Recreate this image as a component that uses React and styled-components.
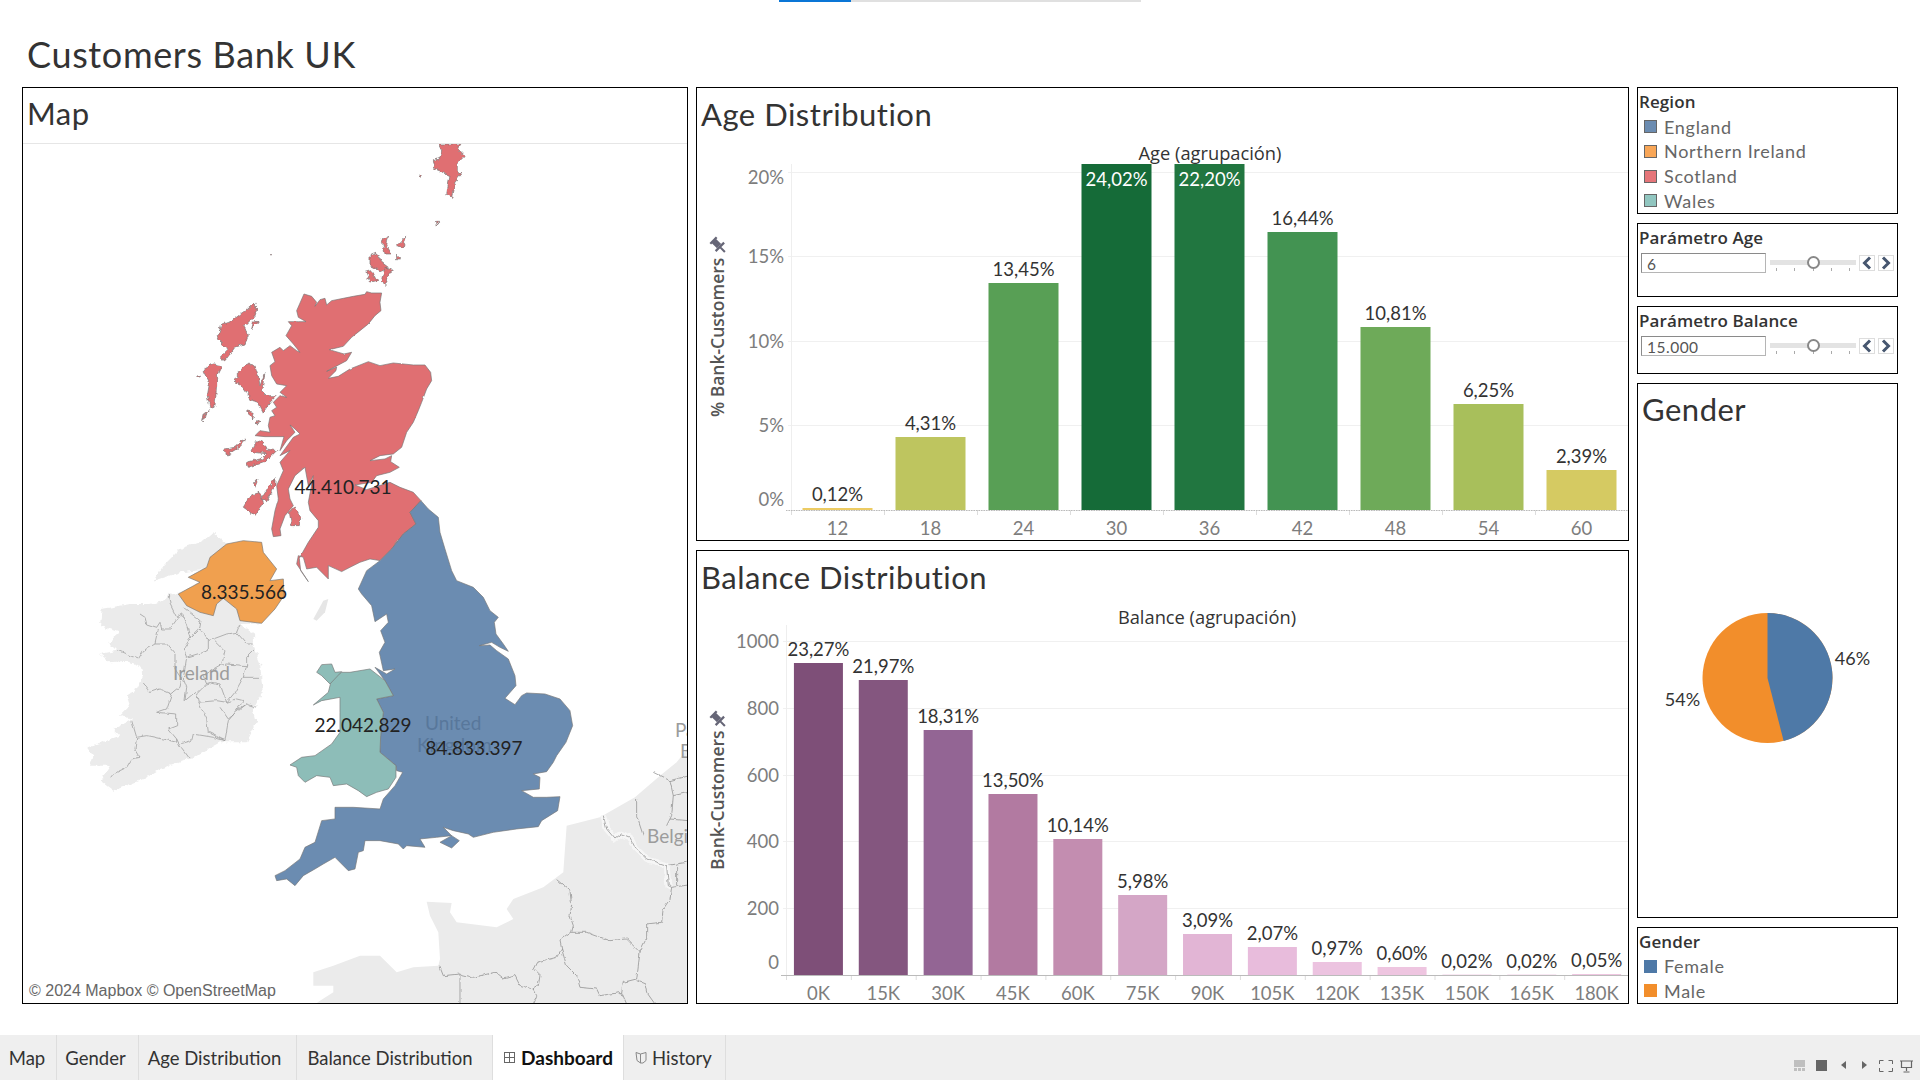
import React from "react";
import styled, {createGlobalStyle} from "styled-components";

const GlobalStyle = createGlobalStyle`
  html, body {
    margin: 0;
    background: #fff;
    font-family: "Lato", "Open Sans", sans-serif;
    color: #333;
    overflow: hidden;
  }
  * { box-sizing: border-box; }
`

const Page = styled.div`
  width: 1920px;
  height: 1080px;
  display: flex;
  flex-direction: column;
`

const Progress = styled.div`
  height: 2px;
  width: 362px;
  margin-left: 779px;
  background: linear-gradient(to right, #0a76d6 72px, #e0e0e0 72px);
`

const PageTitle = styled.h1`
  height: 85px;
  margin: 0;
  padding: 32px 0 0 27px;
  font-size: 36px;
  line-height: 40px;
  font-weight: 400;
  letter-spacing: 0.65px;
  color: #333;
`

const Board = styled.div`
  height: 917px;
  margin: 0 22px;
  display: grid;
  grid-template-columns: 666px 933px 261px;
  column-gap: 8px;
`

const Panel = styled.section`
  border: 1px solid #000;
  background: #fff;
  display: flex;
  flex-direction: column;
  min-height: 0;
  height: ${p => p.$h ? `${p.$h}px` : "auto"};
`

const PanelTitle = styled.h2`
  flex: none;
  height: ${p => p.$h || 57}px;
  margin: 0;
  padding-left: 4px;
  font-size: 31px;
  line-height: ${p => (p.$h || 57) - 5}px;
  font-weight: 400;
  color: #333;
  letter-spacing: 0.5px;
  border-bottom: ${p => p.$rule ? "1px solid #e6e6e6" : "none"};
`

const ChartStack = styled.div`
  display: grid;
  grid-template-rows: 454px 454px;
  row-gap: 9px;
`

const SideStack = styled.div`
  display: flex;
  flex-direction: column;
  gap: 9px;
`

const Chart = styled.svg`
  display: block;
  flex: 1;
  width: 100%;
  min-height: 0;
`

const AxisTitle = styled.text`
  font-family: "Open Sans", sans-serif;
  font-size: 17.5px;
  font-weight: 600;
  fill: #555;
`

const HeadLabel = styled.text`
  font-family: "Open Sans", sans-serif;
  font-size: 18.3px;
  font-weight: 500;
  fill: #333;
  text-anchor: middle;
`

const ValueLabel = styled.text`
  font-size: 18.5px;
  fill: ${p => p.$light ? "#fff" : "#333"};
  text-anchor: middle;
`

const TickLabel = styled.text`
  font-size: 18.5px;
  fill: #7d7d7d;
  text-anchor: ${p => p.$end ? "end" : "middle"};
`

const MapWrap = styled.div`
  position: relative;
  flex: 1;
  min-height: 0;
`

const Credit = styled.div`
  position: absolute;
  left: 2px;
  bottom: 2px;
  padding: 0 4px;
  height: 21px;
  font-family: "Liberation Sans", sans-serif;
  font-size: 16px;
  line-height: 21px;
  color: #666;
  background: rgba(255, 255, 255, 0.7);
  white-space: nowrap;
`

const MapName = styled.text`
  font-size: ${p => p.$size || 18}px;
  fill: ${p => p.$color || "#9c9c9c"};
`

const MapValue = styled.text`
  font-size: 19px;
  fill: #222;
  text-anchor: middle;
`

const BoxTitle = styled.div`
  height: ${p => p.$h || 27}px;
  padding: ${p => p.$top || 2}px 0 0 1px;
  font-family: "Open Sans", sans-serif;
  font-size: 17px;
  line-height: 24px;
  font-weight: 600;
  letter-spacing: 0.1px;
  color: #333;
`

const LegendRow = styled.div`
  height: 25px;
  display: flex;
  align-items: center;
  gap: 7px;
  padding-left: 6px;
  font-size: 18px;
  color: #666;
  letter-spacing: 0.7px;
`

const Swatch = styled.span`
  width: 13px;
  height: 13px;
  flex: none;
  background: ${p => p.$color};
  border: ${p => p.$plain ? "none" : "1px solid #666"};
`

const ParamRow = styled.div`
  display: flex;
  align-items: flex-start;
  margin-top: 2px;
  padding-left: 3px;
`

const ParamInput = styled.div`
  width: 125px;
  height: 20px;
  padding-left: 5px;
  border: 1px solid #b5b5b5;
  border-top-color: #8a8a8a;
  border-left-color: #8a8a8a;
  font-size: 15.5px;
  line-height: 21px;
  color: #555;
  letter-spacing: 0.5px;
`

const Slider = styled.div`
  position: relative;
  width: 86px;
  height: 20px;
  margin: 0 3px 0 4px;
`

const Track = styled.div`
  margin-top: 7px;
  height: 5px;
  background: #e3e3e3;
`

const Ticks = styled.div`
  display: flex;
  justify-content: space-between;
  padding: 0 6px;
  margin-top: 3px;
`

const Tick = styled.span`
  width: 1px;
  height: 3px;
  background: #aaa;
`

const Thumb = styled.span`
  position: absolute;
  left: 37px;
  top: 3px;
  width: 13px;
  height: 13px;
  border-radius: 50%;
  background: #fff;
  border: 2px solid #888;
`

const StepButton = styled.button`
  width: 16px;
  height: 16px;
  padding: 0;
  margin: 2px 3px 0 0;
  background: #fff;
  border: 1px solid #ddd;
  display: flex;
  align-items: center;
  justify-content: center;
`

const PieWrap = styled.div`
  flex: 1;
  display: flex;
  align-items: center;
  justify-content: center;
`

const PieLabel = styled.text`
  font-size: 18px;
  fill: #333;
  text-anchor: middle;
`

const TabBar = styled.div`
  height: 45px;
  margin-top: 31px;
  background: #efefef;
  display: flex;
  align-items: stretch;
`

const Tab = styled.div`
  width: ${p => p.$w}px;
  padding-right: ${p => p.$shift || 0}px;
  display: flex;
  align-items: center;
  justify-content: center;
  gap: 5px;
  border-right: 1px solid #dedede;
  background: ${p => p.$active ? "#fff" : "transparent"};
  color: ${p => p.$active ? "#111" : "#333"};
  font-size: ${p => p.$active ? 19 : 18.5}px;
  font-weight: ${p => p.$active ? 700 : 400};
  white-space: nowrap;
`

const StatusIcons = styled.div`
  margin-left: auto;
  padding: 25px 7px 0 0;
  display: flex;
  align-items: flex-start;
  gap: 11px;
`

const iconStroke = {fill: "none", stroke: "#666", strokeWidth: 1}

const GridIcon = () => (
    <svg width="13" height="13" viewBox="0 0 13 13">
        <rect x="1.5" y="1.5" width="10" height="10" {...iconStroke}/>
        <path d="M6.5 1.5v10M1.5 6.5h10" {...iconStroke}/>
    </svg>
)

const BookIcon = () => (
    <svg width="12" height="13" viewBox="0 0 12 13">
        <path d="M1 1.5l4.5 1.5 5.5-1.5v8l-3 2.5H5.500L2 9.500z" {...iconStroke} stroke="#888"/>
        <path d="M5.500 3v9" {...iconStroke} stroke="#888"/>
    </svg>
)

const Pin = ({x, y}) => (
    <g transform={`translate(${x} ${y}) rotate(-45) scale(1.500)`} fill="#667">
        <rect x="-3" y="-5" width="6" height="1.500"/>
        <rect x="-2" y="-4" width="4" height="5"/>
        <path d="M-4 1h8v1.500H-4zM-.7 2h1.400v4.500H-.7z"/>
    </g>
)

const Chevron = ({left}) => (
    <svg width="12" height="14" viewBox="0 0 12 14">
        <path d={left ? "M9 1.500L3.500 7 9 12.500" : "M3 1.500L8.500 7 3 12.500"} fill="none" stroke="#46566f" strokeWidth="3"/>
    </svg>
)

const ageBars = [
    {label: "12", value: "0,12%", h: 2, color: "#eccb63"},
    {label: "18", value: "4,31%", h: 73, color: "#bec55f"},
    {label: "24", value: "13,45%", h: 227, color: "#589f55"},
    {label: "30", value: "24,02%", h: 346, color: "#156b38", inside: true},
    {label: "36", value: "22,20%", h: 346, color: "#217640", inside: true},
    {label: "42", value: "16,44%", h: 278, color: "#439352"},
    {label: "48", value: "10,81%", h: 183, color: "#6eaa59"},
    {label: "54", value: "6,25%", h: 106, color: "#a8bf5b"},
    {label: "60", value: "2,39%", h: 40, color: "#d5ca62"},
]

const balanceBars = [
    {label: "0K", value: "23,27%", h: 312, color: "#7e4f78"},
    {label: "15K", value: "21,97%", h: 295, color: "#84567f"},
    {label: "30K", value: "18,31%", h: 245, color: "#936594"},
    {label: "45K", value: "13,50%", h: 181, color: "#b27aa1"},
    {label: "60K", value: "10,14%", h: 136, color: "#c38db0"},
    {label: "75K", value: "5,98%", h: 80, color: "#d4a6c6"},
    {label: "90K", value: "3,09%", h: 41, color: "#e2b5d5"},
    {label: "105K", value: "2,07%", h: 28, color: "#e8bcdc"},
    {label: "120K", value: "0,97%", h: 13, color: "#ecc3e0"},
    {label: "135K", value: "0,60%", h: 8, color: "#eec5e0"},
    {label: "150K", value: "0,02%", h: 0.4, color: "#eec5e0"},
    {label: "165K", value: "0,02%", h: 0.4, color: "#eec5e0"},
    {label: "180K", value: "0,05%", h: 1, color: "#eec5e0"},
]

const ageTicks = [
    {label: "20%", grid: 172, base: 184},
    {label: "15%", grid: 256, base: 263},
    {label: "10%", grid: 341, base: 348},
    {label: "5%", grid: 425, base: 432},
    {label: "0%", grid: 510, base: 506},
]

const balanceTicks = [
    {label: "1000", grid: 641, base: 648},
    {label: "800", grid: 708, base: 715},
    {label: "600", grid: 775, base: 782},
    {label: "400", grid: 841, base: 848},
    {label: "200", grid: 908, base: 915},
    {label: "0", grid: 975, base: 969},
]

// charts are drawn in page pixels, viewBox puts the origin where the panel body starts
function BarChart({box, left, slot, barWidth, baseline, top, bars, ticks, tickX, head, headX, headY, axis, axisX, axisY, pinY, dotted}) {
    const right = left + slot * bars.length
    return (
        <Chart viewBox={box}>
            {ticks.map(t => <line key={t.label} x1={tickX + 4} x2={right} y1={t.grid + .5} y2={t.grid + .5} stroke="#f0f0f0"/>)}
            <line x1={left + .5} x2={left + .5} y1={top} y2={baseline} stroke="#eeeeee"/>
            {bars.map((b, i) => {
                const x = left + slot * i + (slot - barWidth) / 2
                const center = left + slot * i + slot / 2
                return (
                    <g key={b.label}>
                        <rect x={x} y={baseline - b.h} width={barWidth} height={b.h} fill={b.color}/>
                        <ValueLabel x={center} y={b.inside ? 186 : baseline - b.h - 7} $light={b.inside}>{b.value}</ValueLabel>
                        <line x1={left + slot * i + .5} x2={left + slot * i + .5} y1={baseline} y2={baseline + 5} stroke="#ddd"/>
                        <TickLabel x={center} y={baseline + 25}>{b.label}</TickLabel>
                    </g>
                )
            })}
            <line x1={tickX + 2} x2={right} y1={baseline + .5} y2={baseline + .5} stroke="#bbb" strokeDasharray={dotted ? "1.500 1" : "none"}/>
            {ticks.map(t => <TickLabel key={t.label} $end x={tickX} y={t.base}>{t.label}</TickLabel>)}
            <HeadLabel x={headX} y={headY}>{head}</HeadLabel>
            <AxisTitle transform={`translate(${axisX} ${axisY}) rotate(-90)`}>{axis}</AxisTitle>
            <Pin x={axisX - 6} y={pinY}/>
        </Chart>
    )
}

const scotland = "372,465 395,472 410,490 405,502 420,482 435,478 440,498 455,485 490,478 520,472 555,466 560,458 575,462 605,462 600,490 603,515 585,530 565,555 540,575 515,595 490,622 448,632 492,645 515,640 500,665 440,697 470,684 468,695 445,718 475,712 510,690 565,668 600,680 640,672 700,678 735,678 752,700 755,725 740,750 725,790 715,815 700,850 680,880 665,925 640,945 600,950 570,965 615,960 635,950 632,968 658,985 630,1000 590,1010 575,1030 525,1038 560,1052 630,1030 660,1045 700,1060 723,1085 690,1120 708,1155 670,1185 635,1230 600,1265 570,1260 540,1270 510,1285 485,1298 445,1280 445,1320 410,1285 380,1290 370,1255 355,1250 350,1275 370,1305 385,1328 362,1295 358,1258 385,1210 415,1165 415,1145 390,1115 385,1090 400,1010 385,1040 375,985 345,1010 325,1050 330,1080 340,1100 315,1130 300,1170 303,1190 280,1193 275,1170 285,1115 295,1080 290,1040 310,995 300,970 330,935 300,950 340,895 360,885 345,870 330,858 345,880 320,905 300,935 312,893 255,893 225,890 240,875 270,880 265,860 270,835 285,830 275,815 290,805 280,790 300,770 320,775 300,760 320,740 290,735 275,710 270,680 285,668 275,640 300,625 310,635 330,620 350,635 360,640 340,615 318,590 335,560 325,548 355,548 378,548 355,535 350,515"

const scotlandIslands = [
    "160,725 175,715 175,695 205,675 225,680 235,710 240,740 255,700 250,730 245,755 260,770 290,770 270,790 250,820 235,790 215,785 195,750",
    "222,490 232,510 225,530 190,565 205,590 195,615 165,625 135,665 120,655 145,630 130,620 112,600 125,555 150,550 195,515",
    "220,550 235,546 215,570",
    "70,690 100,675 125,680 110,710 110,740 105,800 90,805 82,770 88,735 70,700",
    "85,815 65,848 70,825",
    "215,935 230,905 250,910 260,930 290,935 260,965 205,985 200,970 240,960 260,945 225,940",
    "135,930 165,925 195,897 190,910 170,930 140,948",
    "200,815 220,820 215,840",
    "232,845 240,850 228,855",
    "245,1080 285,1015 285,1040 260,1085",
    "190,1105 210,1070 240,1060 250,1090 225,1130 205,1115",
    "220,1035 235,1018 225,1045",
    "328,1120 345,1103 362,1135 358,1160 335,1160",
    "570,350 590,342 605,370 625,385 600,395 570,380",
    "558,400 575,395 590,425 570,430",
    "605,300 625,292 620,320 635,345 615,345",
    "650,320 680,290 670,325",
    "650,345 665,360 650,360",
    "615,385 640,395 625,405 615,440 605,420",
    "775,15 800,15 845,15 835,30 855,50 835,70 835,100 845,105 825,130 815,175 800,165 810,110 790,100 765,90 760,62 780,55 785,35",
    "715,105 724,108 720,116",
    "769,250 776,250 772,259",
    "270,347 275,347 273,352",
    "52,710 62,712 56,715",
]

const england = "483,5 505,30 535,55 540,100 555,150 575,215 590,245 640,265 670,295 690,335 715,355 703,370 708,405 730,435 745,457 720,445 695,430 658,440 690,438 710,455 745,480 765,530 768,560 735,598 765,617 785,590 800,582 855,585 900,600 930,635 938,680 918,730 890,770 880,790 860,818 820,825 840,835 838,870 785,875 820,895 860,895 900,893 893,935 845,965 835,983 770,990 700,1000 640,1015 625,1005 580,995 550,985 575,1010 530,1015 480,1020 495,1045 440,1040 430,1050 415,1035 360,1025 315,1025 310,1055 295,1060 285,1110 265,1115 225,1075 190,1095 165,1110 130,1130 105,1160 80,1140 50,1145 45,1130 75,1115 120,1080 135,1045 165,1030 185,965 225,960 225,925 280,925 360,930 370,900 405,860 428,820 410,815 408,800 360,760 362,710 370,640 350,600 400,590 375,545 345,505 380,525 405,510 370,515 358,460 375,430 362,395 385,370 380,345 345,368 335,320 305,285 295,270 320,215 360,185 395,150 430,105 468,75 450,40"

const wight = "575,1010 598,1025 575,1047 540,1030"

const wales = "245,520 215,540 205,580 160,618 185,605 240,595 240,640 240,700 215,735 165,770 125,775 90,798 110,805 115,830 135,850 170,830 210,835 220,860 260,855 295,875 320,893 350,880 385,870 408,835 408,800 360,760 362,710 370,640 350,600 400,590 375,545 330,510 270,520"

const anglesey = "170,520 185,497 215,495 225,520 245,518 210,555 185,530"

const northernIreland = "440,45 490,35 545,40 550,70 590,120 570,155 610,150 612,200 585,240 545,283 480,275 470,240 430,208 410,225 400,260 360,250 320,230 295,195 360,160 325,145 380,115 390,85"

const ireland = "400,10 440,45 380,115 325,145 360,160 295,195 265,190 250,215 210,225 150,225 65,240 60,290 120,310 85,340 110,365 60,375 90,400 140,395 180,410 190,440 170,480 140,500 150,530 120,560 160,570 100,600 120,620 20,655 40,680 30,710 90,710 60,755 100,785 190,750 240,720 330,690 420,640 500,640 530,580 520,540 548,490 540,400 515,340 530,320 480,285 545,283 500,150 400,120 300,130 220,155 250,110 300,60 370,35"

const irelandLines = [
    "265,195 270,225 290,265 305,255 320,290 330,325 355,300 360,275 310,235",
    "180,255 195,265 200,285 230,295 240,280 245,300 270,300 295,265",
    "235,300 225,345 190,365 175,390 150,380 115,365",
    "225,345 260,345 285,375 285,420 305,450 300,475 275,495 240,480 210,490 190,465",
    "275,495 260,540 230,550 290,555 290,590 265,600 290,630 290,640 250,630 200,620 170,625 155,575",
    "170,625 165,660 180,685 155,690 140,715 100,735 92,745",
    "290,630 300,650 330,690",
    "300,645 335,635 340,615 400,625 435,635 445,575 470,545 500,525 530,535",
    "435,635 385,610 380,570 355,520 350,495 380,465 395,460 420,465 440,520 470,510 490,515 470,545",
    "380,465 370,440 420,410 440,405 500,410 490,445 465,490 440,520",
    "490,445 540,445",
    "500,410 500,385 525,360",
    "310,360 330,330 360,300 385,335 400,330 440,315 470,310 480,285",
    "470,310 500,345 520,345",
    "400,330 435,365 425,405",
    "310,360 320,385 385,365 385,335",
    "320,385 310,450 320,475 315,515 345,490",
    "355,520 410,515 440,520",
    "420,535 445,570 500,525",
]

const continent = "40,640 100,620 180,590 240,590 290,640 340,625 415,620 420,600 415,520 390,470 380,428 455,432 450,460 470,490 590,505 640,480 620,450 640,420 730,385 790,340 800,200 900,175 1005,115 1080,50 1130,10 1170,-40 1170,740 40,740 60,725 100,700 100,680 40,680"

const continentLines = [
    "770,362 810,395 815,440 810,470 820,500 815,520 780,545 785,570 770,595 710,610 700,630 720,650 715,680 700,690 710,710 700,735",
    "700,690 660,680 645,650 610,660 585,640 520,655 480,645 430,650 418,620",
    "480,645 480,735",
    "815,520 860,520 930,545 980,540 1020,580 1010,660 970,670 965,700 900,710 890,690 840,685 830,650 800,620 785,570",
    "1020,580 1040,540 1040,495 1085,490 1090,450 1110,420 1115,385 1165,378",
    "1010,665 1035,675 1040,700 1065,735",
    "965,700 980,735",
    "1130,320 1130,380",
    "1010,120 1010,170 1030,230",
    "1060,40 1110,65 1120,110 1115,170 1100,200",
    "1110,65 1165,50",
    "1120,110 1165,100",
    "1110,180 1165,185",
]

const belgianBorder = "910,170 920,210 945,240 965,225 990,235 1005,265 1040,300 1100,320 1105,380 1115,385"

// roughens the hand traced coast lines so they read like map data
const RoughFilter = ({id, scale, freq}) => (
    <filter id={id} x="-5%" y="-5%" width="110%" height="110%" colorInterpolationFilters="sRGB">
        <feTurbulence type="fractalNoise" baseFrequency={freq} numOctaves="2" seed="4" result="noise"/>
        <feDisplacementMap in="SourceGraphic" in2="noise" scale={scale} xChannelSelector="R" yChannelSelector="G"/>
    </filter>
)

function UkMap() {
    return (
        <MapWrap>
            <svg width="664" height="859" viewBox="23 145 664 859" style={{display: "block"}}>
                <defs>
                    <RoughFilter id="rough" scale={16} freq={.07}/>
                    <RoughFilter id="wiggle" scale={12} freq={.05}/>
                    <RoughFilter id="soft" scale={5} freq={.05}/>
                </defs>
                <g transform="translate(300 760) scale(.3333)">
                    <polygon points={continent} fill="#ebebeb"/>
                    <g filter="url(#wiggle)">
                        <polyline points={belgianBorder} fill="none" stroke="#f6f6f6" strokeWidth="18"/>
                        <polyline points={belgianBorder} fill="none" stroke="#8c8c8c" strokeWidth="2.200"/>
                        <polyline points="1100,320 1160,310" fill="none" stroke="#8c8c8c" strokeWidth="2.200"/>
                        {continentLines.map(l => <polyline key={l} points={l} fill="none" stroke="#8c8c8c" strokeWidth="2.200"/>)}
                    </g>
                </g>
                <g transform="translate(80 530) scale(.3333)">
                    <polygon points={ireland} fill="#ebebeb" filter="url(#rough)"/>
                    <g filter="url(#wiggle)">
                        {irelandLines.map(l => <polyline key={l} points={l} fill="none" stroke="#9a9a9a" strokeWidth="2.200"/>)}
                    </g>
                </g>
                <g transform="translate(260 500) scale(.3333)">
                    <polygon points="160,360 190,305 205,300 195,340 170,365" fill="#e6e6e6"/>
                </g>
                <g transform="translate(180 140) scale(.3333)" fill="#e06f72" stroke="#777" strokeWidth="2" strokeLinejoin="round">
                    <polygon points={scotland} filter="url(#soft)"/>
                    <g filter="url(#rough)">
                        {scotlandIslands.map(p => <polygon key={p} points={p}/>)}
                    </g>
                </g>
                <g transform="translate(260 500) scale(.3333)" stroke="#777" strokeWidth="2" strokeLinejoin="round">
                    <polygon points={england} fill="#6b8cb1"/>
                    <polygon points={wight} fill="#6b8cb1"/>
                    <polygon points={wales} fill="#8dbdb8"/>
                    <polygon points={anglesey} fill="#8dbdb8"/>
                </g>
                <g transform="translate(80 530) scale(.3333)" stroke="#777" strokeWidth="2" strokeLinejoin="round">
                    <polygon points={northernIreland} fill="#f0a04f" filter="url(#soft)"/>
                </g>
                <MapName x="173" y="681" $size="19">Ireland</MapName>
                <MapName x="647" y="844" $size="19">Belgium</MapName>
                <MapName x="675" y="738" $size="19">Países</MapName>
                <MapName x="680" y="759" $size="19">Bajos</MapName>
                <MapName x="425" y="731" $size="19" $color="#58779b">United</MapName>
                <MapName x="417" y="753" $size="19" $color="#58779b">Kingdom</MapName>
                <MapValue x="343" y="495">44.410.731</MapValue>
                <MapValue x="244" y="600">8.335.566</MapValue>
                <MapValue x="363" y="733">22.042.829</MapValue>
                <MapValue x="474" y="756">84.833.397</MapValue>
            </svg>
            <Credit>© 2024 Mapbox © OpenStreetMap</Credit>
        </MapWrap>
    )
}

function Param({title, value, height}) {
    return (
        <Panel $h={height}>
            <BoxTitle $h={27} $top={2}>{title}</BoxTitle>
            <ParamRow>
                <ParamInput>{value}</ParamInput>
                <Slider>
                    <Track/>
                    <Ticks>{[0, 1, 2, 3, 4].map(i => <Tick key={i}/>)}</Ticks>
                    <Thumb/>
                </Slider>
                <StepButton><Chevron left/></StepButton>
                <StepButton><Chevron/></StepButton>
            </ParamRow>
        </Panel>
    )
}

function GenderPie() {
    return (
        <PieWrap>
            <svg width="259" height="160" viewBox="-129.500 -80 259 160">
                <circle r="65" fill="#f28e2b"/>
                <path d="M0 0V-65A65 65 0 0 1 16.160 62.960Z" fill="#4e79a7"/>
                <PieLabel x="85" y="-13">46%</PieLabel>
                <PieLabel x="-85" y="28">54%</PieLabel>
            </svg>
        </PieWrap>
    )
}

export default function App() {
    return (
        <Page>
            <GlobalStyle/>
            <Progress/>
            <PageTitle>Customers Bank UK</PageTitle>
            <Board>
                <Panel>
                    <PanelTitle $h={56} $rule>Map</PanelTitle>
                    <UkMap/>
                </Panel>
                <ChartStack>
                    <Panel>
                        <PanelTitle>Age Distribution</PanelTitle>
                        <BarChart box="697 145 931 395" left={791} slot={93} barWidth={70} baseline={510} top={164}
                                  bars={ageBars} ticks={ageTicks} tickX={784}
                                  head="Age (agrupación)" headX={1210} headY={160}
                                  axis="% Bank-Customers" axisX={724} axisY={417} pinY={245} dotted/>
                    </Panel>
                    <Panel>
                        <PanelTitle>Balance Distribution</PanelTitle>
                        <BarChart box="697 608 931 395" left={786} slot={64.85} barWidth={49} baseline={975} top={625}
                                  bars={balanceBars} ticks={balanceTicks} tickX={779}
                                  head="Balance (agrupación)" headX={1207} headY={624}
                                  axis="Bank-Customers" axisX={724} axisY={870} pinY={719}/>
                    </Panel>
                </ChartStack>
                <SideStack>
                    <Panel $h={127}>
                        <BoxTitle>Region</BoxTitle>
                        <LegendRow><Swatch $color="#6b8cb1"/>England</LegendRow>
                        <LegendRow><Swatch $color="#f8a657"/>Northern Ireland</LegendRow>
                        <LegendRow><Swatch $color="#e57579"/>Scotland</LegendRow>
                        <LegendRow><Swatch $color="#91c6c0"/>Wales</LegendRow>
                    </Panel>
                    <Param title="Parámetro Age" value="6" height={74}/>
                    <Param title="Parámetro Balance" value="15.000" height={68}/>
                    <Panel $h={535}>
                        <PanelTitle $h={55}>Gender</PanelTitle>
                        <GenderPie/>
                    </Panel>
                    <Panel $h={77}>
                        <BoxTitle>Gender</BoxTitle>
                        <LegendRow><Swatch $plain $color="#4e79a7"/>Female</LegendRow>
                        <LegendRow><Swatch $plain $color="#f28e2b"/>Male</LegendRow>
                    </Panel>
                </SideStack>
            </Board>
            <TabBar>
                <Tab $w={57} $shift={2}>Map</Tab>
                <Tab $w={82} $shift={4}>Gender</Tab>
                <Tab $w={158} $shift={6}>Age Distribution</Tab>
                <Tab $w={196} $shift={9}>Balance Distribution</Tab>
                <Tab $w={131} $active><GridIcon/>Dashboard</Tab>
                <Tab $w={102} $shift={2}><BookIcon/>History</Tab>
                <StatusIcons>
                    <svg width="11" height="11" viewBox="0 0 11 11"><path d="M0 0h11v7H0zM0 8h3v3H0zM4 8h3v3H4zM8 8h3v3H8z" fill="#bfbfbf"/></svg>
                    <svg width="11" height="11" viewBox="0 0 11 11"><rect width="11" height="11" fill="#666"/></svg>
                    <svg width="5" height="11" viewBox="0 0 5 11" style={{marginLeft: 3}}><path d="M5 1v8L0 5z" fill="#666"/></svg>
                    <svg width="5" height="11" viewBox="0 0 5 11" style={{marginLeft: 5}}><path d="M0 1v8l5-4z" fill="#666"/></svg>
                    <svg width="14" height="12" viewBox="0 0 14 12" style={{marginLeft: 1}}><path d="M.5 4V.5h4M9.500.500h4V4M13.500 8v3.500h-4M4.500 11.500h-4V8" fill="none" stroke="#666"/></svg>
                    <svg width="13" height="13" viewBox="0 0 13 13" style={{marginLeft: -4}}><path d="M0 1h13M1.500 1v6.500h10V1M6.500 7.500V11M3.500 12h6" fill="none" stroke="#666" strokeWidth="1.200"/></svg>
                </StatusIcons>
            </TabBar>
        </Page>
    )
}
